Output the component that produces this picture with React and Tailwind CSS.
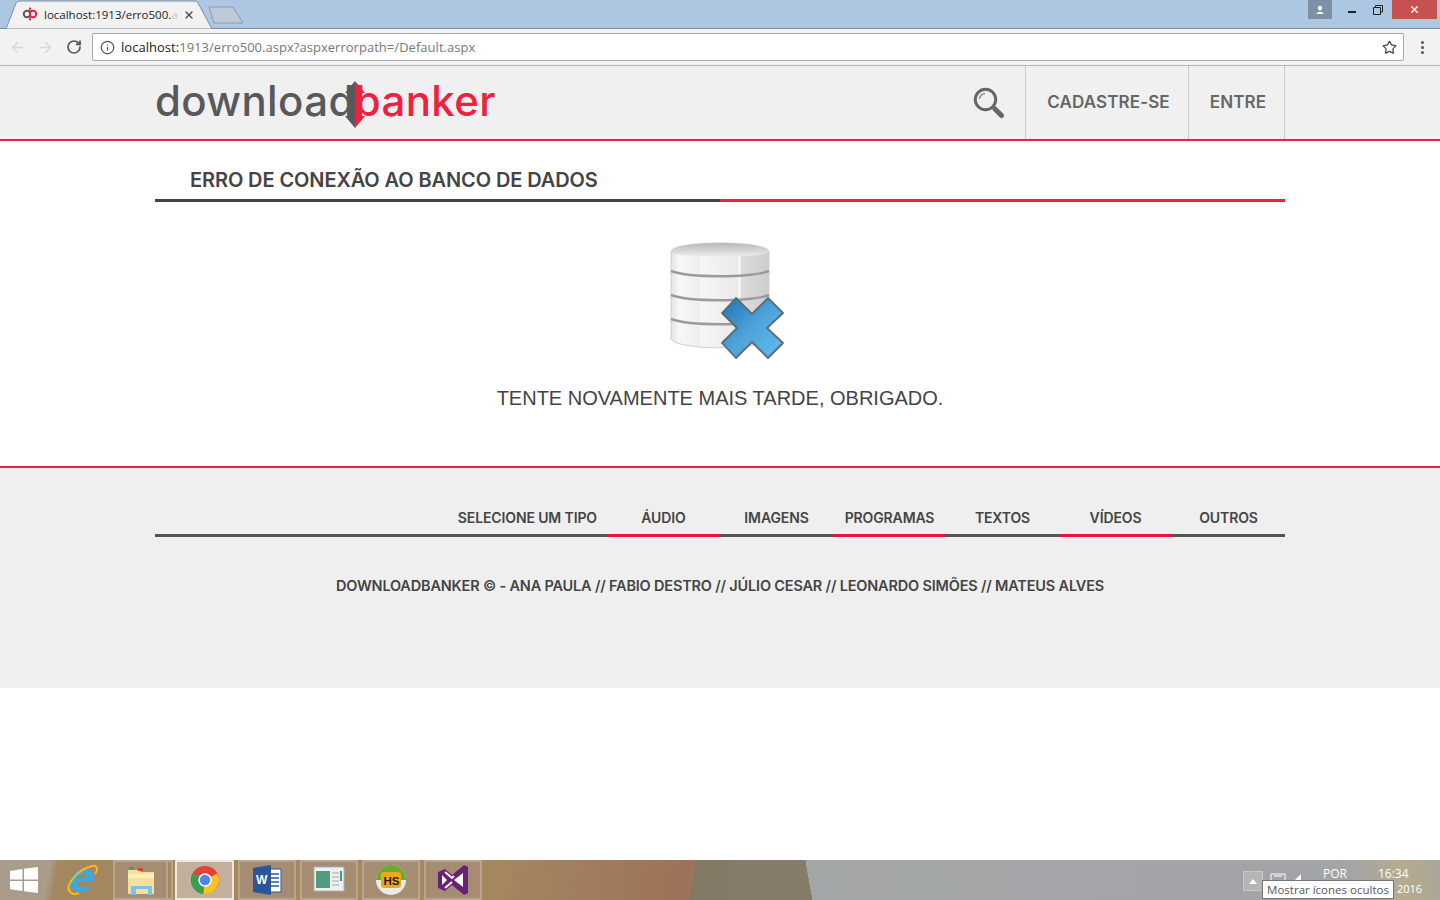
import React from "react";
import { ArrowLeft, ArrowRight, RotateCw, Info, Star, X } from "lucide-react";

const navItems = ["ÁUDIO", "IMAGENS", "PROGRAMAS", "TEXTOS", "VÍDEOS", "OUTROS"];

const LogoMark = ({ className }) => (
    <svg viewBox="0 0 20 47" className={className}>
        <path d="M10 0 L0 12 H5 V35 H0 L10 47 Z" fill="#58595b" />
        <path d="M10 0 L20 12 H15 V35 H20 L10 47 Z" fill="#f0213f" />
    </svg>
);

const Favicon = () => (
    <svg viewBox="0 0 16 16" className="w-4 h-4">
        <circle cx="5" cy="8" r="3.2" fill="none" stroke="#58595b" strokeWidth="2" />
        <circle cx="11" cy="8" r="3.2" fill="none" stroke="#f0213f" strokeWidth="2" />
        <path d="M8 1 L6.5 3 H7.3 V13 H6.5 L8 15 Z" fill="#58595b" />
        <path d="M8 1 L9.5 3 H8.7 V13 H9.5 L8 15 Z" fill="#f0213f" />
    </svg>
);

const DatabaseIcon = () => (
    <svg viewBox="0 0 114 118" className="w-[114px] h-[118px]">
        <defs>
            <linearGradient id="disc" x1="0" y1="0" x2="1" y2="0">
                <stop offset="0" stopColor="#e2e2e2" />
                <stop offset="0.08" stopColor="#f8f8f8" />
                <stop offset="0.29" stopColor="#eeeeee" />
                <stop offset="0.3" stopColor="#f6f6f6" />
                <stop offset="0.68" stopColor="#eaeaea" />
                <stop offset="0.7" stopColor="#fbfbfb" />
                <stop offset="0.72" stopColor="#dcdcdc" />
                <stop offset="1" stopColor="#cdcdcd" />
            </linearGradient>
            <linearGradient id="lid" x1="0" y1="0" x2="0" y2="1">
                <stop offset="0" stopColor="#b9b9b9" />
                <stop offset="1" stopColor="#ececec" />
            </linearGradient>
            <linearGradient id="cross" x1="0" y1="0" x2="1" y2="1">
                <stop offset="0" stopColor="#1c74b4" />
                <stop offset="0.5" stopColor="#4ea4da" />
                <stop offset="1" stopColor="#62bcee" />
            </linearGradient>
        </defs>
        <path d="M1 10 C1 -2 99 -2 99 10 V96 C99 109 1 109 1 96 Z" fill="url(#disc)" stroke="#cfcfcf" />
        <path d="M1 10 C1 -2 99 -2 99 10 C99 16 1 16 1 10 Z" fill="url(#lid)" />
        <path d="M1 29 C20 36 80 36 99 29" fill="none" stroke="#9a9a9a" strokeWidth="2.4" />
        <path d="M1 53 C20 60 80 60 99 53" fill="none" stroke="#9a9a9a" strokeWidth="2.4" />
        <path d="M1 77 C20 84 80 84 99 77" fill="none" stroke="#9a9a9a" strokeWidth="2.4" />
        <path
            d="M52 71 L66 56 L82 72 L98 56 L113 71 L97 86 L113 101 L98 116 L82 100 L66 116 L52 101 L67 86 Z"
            fill="url(#cross)"
            stroke="#5d6a74"
            strokeWidth="1.8"
            strokeLinejoin="round"
        />
    </svg>
);

const SearchIcon = () => (
    <svg viewBox="0 0 32 32" className="w-[32px] h-[32px]">
        <circle cx="12.5" cy="12.5" r="10.2" fill="none" stroke="#666" strokeWidth="3" />
        <path d="M6.5 12 C7 9 9 7 12 6.5" fill="none" stroke="#8a8a8a" strokeWidth="1.5" />
        <path d="M22 22 L28.5 28.5" stroke="#666" strokeWidth="5" strokeLinecap="round" />
    </svg>
);

const TaskButton = ({ active, children }) => (
    <div className={`h-[40px] flex items-center justify-center border-2 ${active ? "w-[59px] border-[#ede8e2] bg-[#c3b09c]" : "w-[58px] border-[#b9a58e] bg-[#a68c72]"}`}>
        {children}
    </div>
);

const App = () => {
    return (
        <div className="w-[1440px] h-[900px] flex flex-col overflow-hidden bg-white font-['Liberation_Sans',sans-serif]">
            {/* browser tabs */}
            <div className="h-[29px] shrink-0 bg-[#adc7e2] border-b border-[#7d8ea3] flex items-end relative">
                <div className="relative w-[206px] h-[28px] ml-[6px] flex items-center pl-[16px] z-10">
                    <svg viewBox="0 0 206 29" className="absolute left-0 top-0 w-[206px] h-[29px]">
                        <path d="M0 29 L10 3 Q11 1 14 1 H188 Q191 1 192 3 L206 29 Z" fill="#f2f2f2" stroke="#7d8ea3" />
                    </svg>
                    <span className="relative mr-[6px]"><Favicon /></span>
                    <span className="relative w-[133px] pt-[2px] whitespace-nowrap text-[11.5px] text-[#222] font-['Open_Sans',sans-serif]">localhost:1913/erro500.<span className="text-[#c4c4c4]">a</span></span>
                    <X className="relative w-[12px] h-[12px] ml-[6px] mt-[2px] text-[#444]" strokeWidth={2.5} />
                </div>
                <svg viewBox="0 0 36 18" className="w-[36px] h-[18px] -ml-[4px] mb-[4px]">
                    <path d="M1 1 H25 L35 17 H6 Z" fill="#bcc9d8" stroke="#8c9bad" strokeLinejoin="round" />
                </svg>
                <div className="ml-auto mr-[3px] self-start flex items-start">
                    <div className="w-6 h-[19px] bg-[#7d90a5] flex items-center justify-center">
                        <svg viewBox="0 0 10 10" className="w-[10px] h-[10px]"><circle cx="5" cy="3" r="2.2" fill="#fff" /><path d="M1 9 Q5 4 9 9 Z" fill="#fff" /></svg>
                    </div>
                    <div className="w-[60px] h-[19px] flex items-center justify-center gap-[17px] pl-[6px]">
                        <span className="w-2 h-[2px] bg-[#222] mt-[5px]" />
                        <svg viewBox="0 0 10 10" className="w-[10px] h-[10px]"><path d="M2.5 2.5 V0.5 H9.5 V7 H7.5 M0.5 2.5 H7.5 V9.5 H0.5 Z" fill="none" stroke="#222" /></svg>
                    </div>
                    <div className="w-[45px] h-[19px] bg-[#c75050] flex items-center justify-center">
                        <X className="w-[11px] h-[11px] text-white" strokeWidth={3} />
                    </div>
                </div>
            </div>

            {/* browser toolbar */}
            <div className="h-[37px] shrink-0 bg-[#f2f2f2] border-b border-[#b5b5b5] flex items-center pl-[9px]">
                <ArrowLeft className="w-[17px] h-[17px] text-[#d8d8d8]" strokeWidth={2} />
                <ArrowRight className="w-[17px] h-[17px] ml-[11px] text-[#d8d8d8]" strokeWidth={2} />
                <RotateCw className="w-[16px] h-[16px] ml-[12px] text-[#555]" strokeWidth={2.6} />
                <div className="w-[1312px] h-[28px] ml-[10px] bg-white border border-[#a9a9a9] rounded-[2px] flex items-center pl-[7px] pr-[6px]">
                    <Info className="w-[15px] h-[15px] text-[#555]" strokeWidth={2} />
                    <span className="ml-[6px] pt-[2px] text-[13px] tracking-[0.03px] font-['Open_Sans',sans-serif] text-[#777] whitespace-nowrap">
                        <span className="text-[#222]">localhost:</span>1913/erro500.aspx?aspxerrorpath=/Default.aspx
                    </span>
                    <Star className="w-[15px] h-[15px] ml-auto text-[#444]" strokeWidth={2} />
                </div>
                <div className="ml-[17px] flex flex-col gap-[2px]">
                    <span className="w-[3px] h-[3px] rounded-full bg-[#555]" />
                    <span className="w-[3px] h-[3px] rounded-full bg-[#555]" />
                    <span className="w-[3px] h-[3px] rounded-full bg-[#555]" />
                </div>
            </div>

            {/* header */}
            <div className="h-[75px] shrink-0 bg-[#f0f0f0] border-b-2 border-[#f0213f]">
                <div className="w-[1130px] h-full mx-auto flex items-center font-['Inter',sans-serif]">
                    <div className="flex items-center pb-[3px] text-[42px] leading-none font-medium tracking-[0.35px]">
                        <span className="text-[#58595b]">download</span>
                        <LogoMark className="w-[20px] h-[47px] -mx-[10px] mt-[7px] relative" />
                        <span className="text-[#f0213f]">banker</span>
                    </div>
                    <div className="ml-auto h-full flex text-[17px] font-semibold text-[#666] tracking-[0.12px]">
                        <div className="w-[52px] flex items-center justify-start -ml-[3px]"><SearchIcon /></div>
                        <div className="w-[163px] pl-[3px] flex items-center justify-center border-l border-[#ccc]">CADASTRE-SE</div>
                        <div className="w-[97px] pl-[3px] flex items-center justify-center border-x border-[#ccc]">ENTRE</div>
                    </div>
                </div>
            </div>

            {/* content */}
            <div className="h-[327px] shrink-0 bg-white border-b-2 border-[#f0213f]">
                <div className="w-[1130px] mx-auto">
                    <h1 className="h-[58px] flex items-end pl-[35px] pb-[6px] text-[20px] leading-[26px] font-['Inter',sans-serif] font-semibold tracking-[-0.1px] text-[#444]">ERRO DE CONEXÃO AO BANCO DE DADOS</h1>
                    <div className="flex h-[3px]">
                        <div className="w-1/2 bg-[#444]" />
                        <div className="w-1/2 bg-[#f0213f]" />
                    </div>
                    <div className="flex flex-col items-center pt-[40px]">
                        <div className="pl-[14px]"><DatabaseIcon /></div>
                        <p className="mt-[25px] text-[20px] leading-[26px] text-[#444]">TENTE NOVAMENTE MAIS TARDE, OBRIGADO.</p>
                    </div>
                </div>
            </div>

            {/* footer */}
            <div className="h-[220px] shrink-0 bg-[#efefef] font-['Inter',sans-serif] text-[#444]">
                <div className="w-[1130px] mx-auto pt-[39px]">
                    <div className="flex h-[30px] text-[14px] leading-[18px] font-semibold tracking-[-0.12px] border-b-[3px] border-[#555]">
                        <div className="w-[452px] text-right pr-[10px] pt-[2px]">SELECIONE UM TIPO</div>
                        {navItems.map((item, index) => (
                            <div key={item} className={`w-[113px] text-center pt-[2px] h-[30px] border-b-[3px] ${index % 2 === 0 ? "border-[#f50f36]" : "border-transparent"}`}>{item}</div>
                        ))}
                    </div>
                    <p className="mt-[39px] text-center text-[14.5px] font-semibold tracking-[-0.185px] leading-[20px]">DOWNLOADBANKER © - ANA PAULA // FABIO DESTRO // JÚLIO CESAR // LEONARDO SIMÕES // MATEUS ALVES</p>
                </div>
            </div>

            <div className="flex-1 bg-white" />

            {/* windows taskbar */}
            <div className="h-[40px] shrink-0 relative flex items-center bg-[linear-gradient(80deg,transparent_800px,#a3a6a6_800px,#a2a4a8_1300px,#a6a6a2_1345px,#b6ab8e_1385px,#aaa69a_1425px),linear-gradient(100deg,#a99c8a_0,#a99c8a_50px,#a5875f_58px,#a5885f_480px,#a07a5c_600px,#9d7258_686px,#837a66_686px,#857c6a_800px)]">
                <div className="w-[47px] flex justify-center">
                    <svg viewBox="0 0 28 26" className="w-[28px] h-[26px]">
                        <path d="M0 4 L12.5 2 V12.5 H0 Z M14 1.8 L28 0 V12.5 H14 Z M0 14 H12.5 V24 L0 22.2 Z M14 14 H28 V26 L14 24.2 Z" fill="#fff" />
                    </svg>
                </div>
                <div className="w-[66px] pl-[4px] flex justify-center">
                    <svg viewBox="0 0 32 32" className="w-8 h-8">
                        <path d="M4 20 C4 11 11 5 19 5 C27 5 29 12 28 18 H11 C12 24 20 25 26 21 C23 28 15 30 10 27 C6 25 4 23 4 20 Z M11 14 H22 C21 9 13 9 11 14 Z" fill="#39a9e0" fillRule="evenodd" />
                        <path d="M3 27 C0 22 10 6 26 2 C32 1 32 6 29 10" fill="none" stroke="#f5b921" strokeWidth="2" />
                        <path d="M3 24 C3 30 8 31 13 29" fill="none" stroke="#f5b921" strokeWidth="2" />
                    </svg>
                </div>
                <div className="flex gap-[4px] items-center">
                    <div className="flex -mr-[2px]">
                        <div className="w-[55px] h-[40px] flex items-center justify-center border-2 border-[#b9a58e] bg-[#a68c72]">
                            <svg viewBox="0 0 30 30" className="w-[30px] h-[30px]">
                                <path d="M2 5 H13 L15 7 H28 V29 H2 Z" fill="#f6e09a" />
                                <path d="M3 2 H8 V5 H3 Z" fill="#3fa55b" />
                                <path d="M12 3 H17 V6 H12 Z" fill="#d8453d" />
                                <path d="M2 9 H28 V13 H2 Z" fill="#fbeeb8" />
                                <path d="M5 21 H26 V30 H22 V24 H10 V30 H5 Z" fill="#78c3e8" />
                            </svg>
                        </div>
                        <div className="w-[5px] h-[40px] border-2 border-l-0 border-[#b9a58e]" />
                    </div>
                    <TaskButton active>
                        <svg viewBox="0 0 32 32" className="w-[30px] h-[30px]">
                            <circle cx="16" cy="16" r="15" fill="#e34133" />
                            <path d="M16 16 L29 9 A15 15 0 0 1 14 31 Z" fill="#f7c325" />
                            <path d="M16 16 L14 31 A15 15 0 0 1 3 8.5 Z" fill="#3a9e4e" />
                            <circle cx="16" cy="16" r="7.2" fill="#fff" />
                            <circle cx="16" cy="16" r="5.6" fill="#4d86e8" />
                        </svg>
                    </TaskButton>
                    <TaskButton>
                        <svg viewBox="0 0 32 32" className="w-8 h-8">
                            <path d="M14 5 H30 V28 H14 Z" fill="#fff" stroke="#2b579a" />
                            <path d="M18 10 H28 M18 14 H28 M18 18 H28 M18 22 H28" stroke="#2b579a" strokeWidth="1.4" />
                            <path d="M2 4 L20 1 V31 L2 28 Z" fill="#2b579a" />
                            <text x="5" y="20" fontSize="12" fontWeight="700" fill="#fff" fontFamily="Liberation Sans">W</text>
                        </svg>
                    </TaskButton>
                    <TaskButton>
                        <svg viewBox="0 0 32 32" className="w-8 h-8">
                            <path d="M1 3 H31 V27 H1 Z" fill="#eef1f4" stroke="#a9b0b8" />
                            <path d="M3 7 H17 V24 H3 Z" fill="#4f9d7c" />
                            <path d="M19 9 H26 M19 13 H26 M19 17 H26 M19 21 H26" stroke="#9aa4ad" />
                            <path d="M27 7 H29 V17 H27 Z" fill="#3f9c6a" />
                        </svg>
                    </TaskButton>
                    <TaskButton>
                        <svg viewBox="0 0 32 32" className="w-8 h-8">
                            <circle cx="16" cy="16" r="15" fill="#e9ece4" />
                            <path d="M1 16 A15 15 0 0 1 31 16 Z" fill="#6cab2c" />
                            <rect x="6" y="8" width="20" height="16" rx="3" fill="#eea720" />
                            <text x="8.5" y="21" fontSize="11.5" fontWeight="700" fill="#222" fontFamily="Liberation Sans">HS</text>
                        </svg>
                    </TaskButton>
                    <TaskButton>
                        <svg viewBox="0 0 32 32" className="w-8 h-8">
                            <path d="M1 8 L8 5 L15 11 L27 1 L31 3 V29 L27 31 L15 21 L8 27 L1 24 Z" fill="#68217a" />
                            <path d="M5 11 L10 16 L5 21 Z M26 9 V23 L17 16 Z" fill="#fff" />
                            <path d="M8 8 L15 14 L17 12 M8 24 L15 18" stroke="#fff" strokeWidth="2" fill="none" />
                        </svg>
                    </TaskButton>
                </div>

                <div className="ml-auto w-[197px] h-full flex items-start text-[12px] text-white font-['Open_Sans',sans-serif]">
                    <div className="w-[20px] h-[20px] mt-[11px] border border-[#c8c8c8] bg-[#b5b5b5] flex items-center justify-center">
                        <svg viewBox="0 0 8 5" className="w-2 h-[5px]"><path d="M4 0 L8 5 H0 Z" fill="#fff" /></svg>
                    </div>
                    <svg viewBox="0 0 32 8" className="w-[32px] h-[8px] ml-[7px] mt-[13px]">
                        <path d="M1 1 H15 V8 H1 Z M4 3 H12" fill="none" stroke="#fff" />
                        <path d="M24 8 L31 1 V8 Z" fill="#fff" />
                    </svg>
                    <span className="ml-[21px] mt-[5px]">POR</span>
                    <span className="ml-[31px] mt-[5px]">16:34</span>
                </div>

                {/* tooltip over the tray */}
                <div className="absolute left-[1262px] top-[20px] h-[19px] w-[132px] text-center bg-white border border-[#767676] text-[11.5px] leading-[17px] text-[#575757] font-['Open_Sans',sans-serif] whitespace-nowrap">Mostrar ícones ocultos</div>
                <span className="absolute left-[1397px] top-[21px] text-[11px] text-white font-['Open_Sans',sans-serif]">2016</span>
            </div>
        </div>
    );
};

export default App;
